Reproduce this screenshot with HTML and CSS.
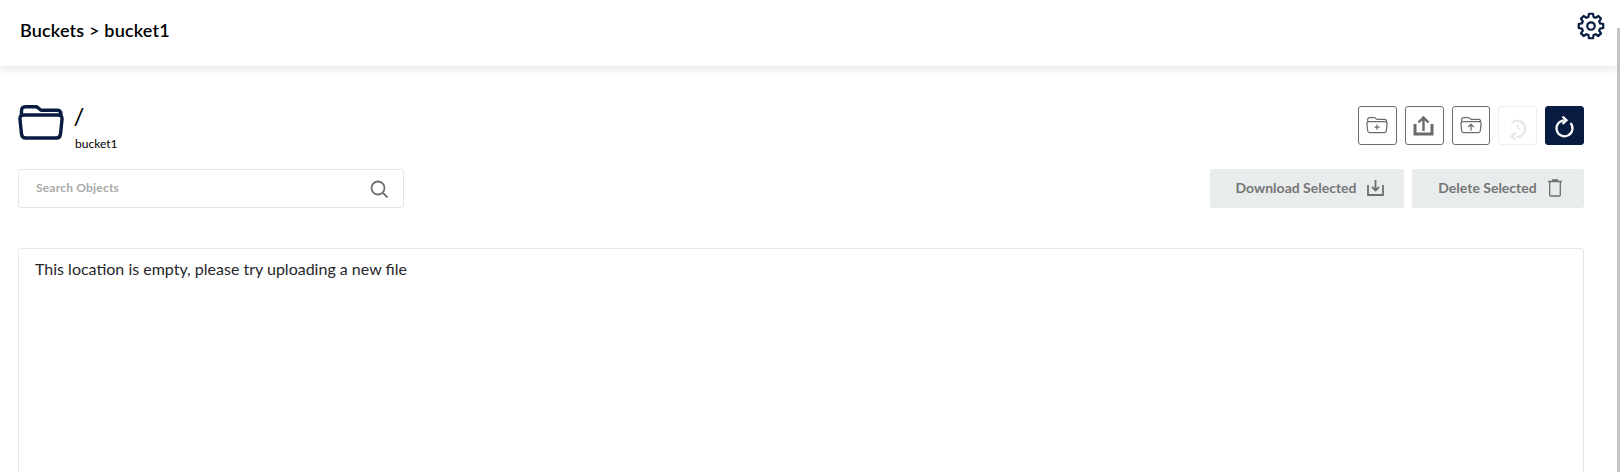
FILE: index.html
```html
<!DOCTYPE html>
<html lang="en">
<head>
    <meta charset="UTF-8">
    <meta name="viewport" content="width=device-width, initial-scale=1.0">
    <title>bucket1</title>
    <link rel="stylesheet" href="styles.css">
</head>
<body>
    <header class="topbar">
        <h1 class="crumbs">Buckets &gt; bucket1</h1>
        <button class="settings" aria-label="Settings">
            <svg width="28" height="28" viewBox="0 0 24 24" fill="none" stroke="#081c42" stroke-width="1.9" stroke-linejoin="round">
                <circle cx="12" cy="12" r="3.2"/>
                <path d="M10.3 1.500h3.400l.5 2.700 1.800.8 2.300-1.600 2.300 2.300-1.600 2.300.8 1.800 2.700.5v3.400l-2.700.5-.8 1.800 1.600 2.300-2.300 2.300-2.300-1.600-1.800.8-.5 2.700h-3.400l-.5-2.700-1.800-.8-2.300 1.600-2.300-2.300 1.600-2.300-.8-1.800-2.700-.5v-3.400l2.700-.5.8-1.800-1.600-2.300 2.300-2.300 2.300 1.600 1.800-.8z"/>
            </svg>
        </button>
    </header>
    <main class="content">
        <section class="location-row">
            <div class="location">
                <svg class="folder" width="46" height="36" viewBox="0 0 46 36" fill="none" stroke="#081c42" stroke-width="3.4" stroke-linejoin="round">
                    <path d="M3.500 10V6q0-4.300 4-4.300h10q1.500 0 2.500 1l3 2.500h16q4 0 4 4v1"/>
                    <path d="M6 10h34q4.500 0 4 4.500l-1.500 14.500q-.5 4-4 4H7.500q-3.500 0-4-4L2 14.500q-.5-4.500 4-4.500z"/>
                </svg>
                <div class="location-text">
                    <div class="path">/</div>
                    <div class="bucket-name">bucket1</div>
                </div>
            </div>
            <div class="icon-buttons">
                <button class="icon-btn" aria-label="Create folder">
                    <svg width="22" height="19" viewBox="0 0 46 36" fill="none" stroke="#6b6b6b" stroke-width="2.600" stroke-linejoin="round">
                        <path d="M3.500 10V6q0-4.300 4-4.300h10q1.500 0 2.500 1l3 2.500h16q4 0 4 4v1"/>
                        <path d="M6 10h34q4.500 0 4 4.500l-1.500 14.500q-.5 4-4 4H7.500q-3.500 0-4-4L2 14.500q-.5-4.500 4-4.500z"/>
                        <path d="M23 16v11M17.500 21.500h11"/>
                    </svg>
                </button>
                <button class="icon-btn" aria-label="Upload file">
                    <svg width="24" height="26" viewBox="0 0 24 26" fill="none" stroke="#6b6b6b">
                        <path d="M3 11v10h17V11" stroke-width="3"/>
                        <path d="M11.500 18V5M6.500 9.500l5-5 5 5" stroke-width="2.400"/>
                    </svg>
                </button>
                <button class="icon-btn" aria-label="Upload folder">
                    <svg width="22" height="19" viewBox="0 0 46 36" fill="none" stroke="#6b6b6b" stroke-width="2.600" stroke-linejoin="round">
                        <path d="M3.500 10V6q0-4.300 4-4.300h10q1.500 0 2.500 1l3 2.500h16q4 0 4 4v1"/>
                        <path d="M6 10h34q4.500 0 4 4.500l-1.500 14.500q-.5 4-4 4H7.500q-3.500 0-4-4L2 14.500q-.5-4.500 4-4.500z"/>
                        <path d="M23 29V16M17 21.500l6-6 6 6"/>
                    </svg>
                </button>
                <button class="icon-btn disabled" aria-label="Rewind">
                    <svg width="24" height="24" viewBox="0 0 24 24" fill="none" stroke="#e6e6e6" stroke-width="2.200">
                        <path d="M5.500 9a8 8 0 1 1 5 13.700"/>
                        <path d="M9.500 18.500l-4 3.700 4 3.300"/>
                        <path d="M11.500 10.500l.8 4 2.500 1.500" stroke-width="1.300"/>
                    </svg>
                </button>
                <button class="icon-btn active" aria-label="Refresh">
                    <svg width="24" height="24" viewBox="0 0 24 24" fill="none" stroke="#fff" stroke-width="2.200">
                        <path d="M17.500 9a8 8 0 1 1-6-2.700"/>
                        <path d="M9.500 2.500l4 3.700-4 3.800"/>
                    </svg>
                </button>
            </div>
        </section>
        <section class="actions-row">
            <label class="search">
                <input type="text" placeholder="Search Objects">
                <svg width="20" height="20" viewBox="0 0 20 20" fill="none" stroke="#707070" stroke-width="1.800">
                    <circle cx="9" cy="9" r="6.500"/>
                    <path d="M14 14l4.500 4.500"/>
                </svg>
            </label>
            <div class="bulk-actions">
                <button class="bulk-btn download">
                    Download Selected
                    <svg width="17" height="17" viewBox="0 0 17 17" fill="none" stroke="#6f6f6f" stroke-width="1.800">
                        <path d="M1 6v10h15V6"/>
                        <path d="M8.500 1v10M5 8l3.500 3.500L12 8"/>
                    </svg>
                </button>
                <button class="bulk-btn delete">
                    Delete Selected
                    <svg width="14" height="18" viewBox="0 0 14 18" fill="none" stroke="#6f6f6f" stroke-width="1.300">
                        <path d="M0 2.500h14M4.500 2.500V1h5v1.500"/>
                        <path d="M1.700 2.500v13.500q0 1 1 1h8.600q1 0 1-1V2.500"/>
                    </svg>
                </button>
            </div>
        </section>
        <section class="listing">This location is empty, please try uploading a new file</section>
    </main>
    <div class="scroll-thumb"></div>
</body>
</html>
```

FILE: styles.css
```css
html, body {
    height: 100%;
}
body {
    margin: 0;
    background-color: #fff;
    color: #000;
    font-family: 'Lato', sans-serif;
    overflow: hidden;
}
button {
    font-family: inherit;
    cursor: pointer;
}
.topbar {
    display: flex;
    justify-content: space-between;
    align-items: flex-start;
    height: 66px;
    padding: 0 15px 0 20px;
    box-shadow: 0 3px 10px rgba(0, 0, 0, 0.1);
}
.crumbs {
    margin: 0;
    padding-top: 19px;
    font-size: 18px;
    line-height: 22px;
    font-weight: 600;
    letter-spacing: 0.18px;
}
.settings {
    margin-top: 12px;
    padding: 0;
    border: 0;
    background: none;
    display: flex;
}
.content {
    height: calc(100vh - 66px);
    box-sizing: border-box;
    overflow: hidden;
    padding: 38px 36px 0 18px;
}
.location-row {
    display: flex;
    justify-content: space-between;
    height: 65px;
}
.location {
    display: flex;
    align-items: flex-start;
    gap: 11px;
}
.folder {
    margin-top: 1px;
}
.location-text {
    display: flex;
    flex-direction: column;
}
.path {
    font-size: 24px;
    line-height: 29px;
    margin: -3px 0 0 -1.500px;
}
.bucket-name {
    font-size: 12px;
    line-height: 15px;
    margin-top: 6px;
}
.icon-buttons {
    display: flex;
    gap: 8px;
    margin-top: 2px;
}
.icon-btn {
    display: flex;
    align-items: center;
    justify-content: center;
    width: 38.8px;
    height: 39px;
    padding: 0;
    background: #fff;
    border: 1px solid #6b6b6b;
    border-radius: 3px;
}
.icon-btn svg {
    overflow: visible;
}
.icon-btn.disabled {
    border-color: #eee;
}
.icon-btn.active {
    background: #081c42;
    border-color: #081c42;
}
.actions-row {
    display: flex;
    justify-content: space-between;
}
.search {
    display: flex;
    align-items: center;
    width: 386px;
    height: 39px;
    box-sizing: border-box;
    border: 1px solid #e5e5e5;
    border-radius: 3px;
    padding: 0 14px 0 17px;
}
.search input {
    flex: 1;
    border: 0;
    outline: 0;
    padding: 0 0 2px;
    font-family: inherit;
    font-size: 12px;
    font-weight: 700;
    letter-spacing: 0.2px;
}
.search input::placeholder {
    color: #a8a8a8;
    opacity: 1;
}
.bulk-actions {
    display: flex;
    gap: 8px;
}
.bulk-btn {
    display: flex;
    align-items: center;
    justify-content: center;
    gap: 10px;
    height: 39px;
    padding: 0 0 2px 5px;
    border: 0;
    border-radius: 3px;
    background: #e9ecec;
    color: #767676;
    font-size: 14px;
    font-weight: 700;
}
.bulk-btn.download {
    width: 194px;
}
.bulk-btn.delete {
    width: 172px;
    gap: 11px;
    padding-left: 4px;
}
.listing {
    margin-top: 40px;
    height: 300px;
    box-sizing: border-box;
    border: 1px solid #e8e8e8;
    border-radius: 3px;
    padding: 9px 16px;
    font-size: 16px;
    line-height: 21px;
    color: #26262c;
}
.scroll-thumb {
    position: fixed;
    right: 0;
    top: 28px;
    bottom: 0;
    width: 3px;
    background: #c4c4c4;
}
```
